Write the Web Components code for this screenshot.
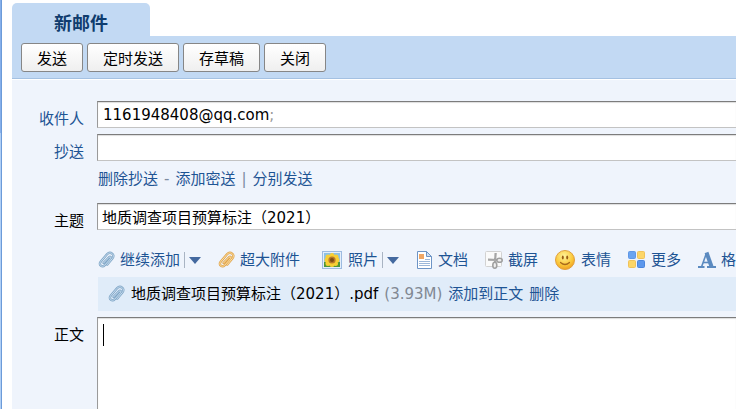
<!DOCTYPE html>
<html lang="zh-CN">
<head>
<meta charset="utf-8">
<title>新邮件</title>
<style>
  html, body {
    margin: 0;
    height: 100%;
    overflow: hidden;
    background: #fff;
  }
  body {
    font-family: "DejaVu Sans", "Noto Sans CJK SC", sans-serif;
    font-size: 15px;
    line-height: 20px;
    color: #000;
    --link: #1e5494;
  }
</style>
</head>
<body>

<mail-page>
  <mail-tab slot="tab">新邮件</mail-tab>
  <tool-button slot="actions">发送</tool-button>
  <tool-button slot="actions">定时发送</tool-button>
  <tool-button slot="actions">存草稿</tool-button>
  <tool-button slot="actions">关闭</tool-button>
  <compose-form></compose-form>
</mail-page>

<script>
const template = (html) => {
  const el = document.createElement('template');
  el.innerHTML = html;
  return el;
};

class BaseElement extends HTMLElement {
  constructor() {
    super();
    this.attachShadow({mode: 'open'});
    this.shadowRoot.appendChild(this.constructor.template.content.cloneNode(true));
  }
}

class MailPage extends BaseElement {
  static template = template(
    `<style>
       :host {
         display: flex;
         height: 100%;
       }
       .rail {
         flex: none;
         width: 1px;
         margin-right: 10px;
         border-right: 1px solid #6c9bd9;
         background: linear-gradient(#86afea 133px, #b0cff5 133px);
       }
       .main {
         flex: 1;
         min-width: 0;
         display: flex;
         flex-direction: column;
         padding-top: 3px;
       }
       .bar {
         display: flex;
         gap: 4px;
         padding: 7px 9px 6px;
         background: #c2d9f3;
         border-bottom: 1px solid #a4c1e2;
         margin-bottom: 1px;
       }
       .content {
         flex: 1;
         min-height: 0;
         display: flex;
         background: #eff4fc;
       }
     </style>
     <div class="rail"></div>
     <main class="main">
       <slot name="tab"></slot>
       <div class="bar"><slot name="actions"></slot></div>
       <div class="content"><slot></slot></div>
     </main>`);
}

class MailTab extends BaseElement {
  static template = template(
    `<style>
       :host {
         display: block;
         align-self: flex-start;
         box-sizing: border-box;
         height: 33px;
         padding: 9px 42px 0;
         border-radius: 5px 5px 0 0;
         background: #c2d9f3;
         color: #0f3c6e;
         font-size: 18px;
         line-height: 24px;
         font-weight: bold;
       }
     </style>
     <slot></slot>`);
}

class ToolButton extends BaseElement {
  static template = template(
    `<style>
       :host {
         display: block;
       }
       button {
         display: block;
         height: 29px;
         padding: 3px 15px 0;
         border: 1px solid #868686;
         border-radius: 3px;
         background: linear-gradient(#fff, #efefef);
         color: #000;
         font: inherit;
         line-height: 24px;
         white-space: nowrap;
         cursor: pointer;
       }
     </style>
     <button type="button"><slot></slot></button>`);
}

const icons = {
  clip: [17, 18,
    `<g fill="none" stroke-linecap="round" stroke-linejoin="round">
       <path stroke="var(--clip-edge, #7fa5c6)" stroke-width="2.400" d="M5.500 12 11 6.300c1.300-1.300 2.600.1 1.500 1.400l-5.800 6.500c-2.500 2.700-6.600-.4-4-3.500L9 3.300c3.300-3.600 8.600.3 5.300 4.300l-5 6"/>
       <path stroke="var(--clip-fill, #c9deef)" stroke-width="1" d="M5.500 12 11 6.300c1.300-1.300 2.600.1 1.500 1.400l-5.800 6.500c-2.500 2.700-6.600-.4-4-3.500L9 3.300c3.300-3.600 8.600.3 5.300 4.300l-5 6"/>
     </g>`],
  photo: [26, 20,
    `<rect x="5.500" y="1.500" width="19" height="17" fill="#e4eefa" stroke="#9dbbe0"/>
     <rect x="7" y="3" width="16" height="14" fill="#8cc0e4"/>
     <path fill="#4f9638" d="M7 12h16v5H7z"/>
     <g fill="#f8cf35">
       <circle cx="15" cy="5.500" r="2.500"/><circle cx="19" cy="7" r="2.500"/><circle cx="20" cy="10" r="2.500"/>
       <circle cx="18.500" cy="13.500" r="2.500"/><circle cx="15" cy="14.500" r="2.500"/><circle cx="11" cy="13.500" r="2.500"/>
       <circle cx="10" cy="10" r="2.500"/><circle cx="11" cy="7" r="2.500"/>
     </g>
     <circle cx="15" cy="10" r="3.600" fill="#b8782a"/><circle cx="15" cy="10" r="2" fill="#7d4c14"/>`],
  doc: [17, 18,
    `<path fill="#fff" stroke="#6d94c6" d="M1.500.5h9l5 5v12h-14z"/>
     <path fill="#cfe0f4" stroke="#6d94c6" d="M10.500.5v5h5z"/>
     <path fill="#f0a765" d="M3 3h5v5H3z"/>
     <path stroke="#9cb7d9" d="M9 8.500h5M3 10.500h11M3 12.500h11M3 14.500h11"/>`],
  cut: [18, 20,
    `<rect x=".5" y="1.500" width="16" height="15" rx="1" fill="#fafafa" stroke="#d2d2d2"/>
     <path fill="#a5a5a5" d="M9.500 3h2.300l-.8 9H9zM3 8.500l9.500.5v2L3 10.700z"/>
     <g fill="#eee" stroke="#a0a0a0" stroke-width="1.600">
       <ellipse cx="9.800" cy="15.300" rx="2" ry="3"/><ellipse cx="14.500" cy="10.300" rx="2.700" ry="2"/>
     </g>`],
  smile: [21, 20,
    `<defs><radialGradient id="face" cx=".45" cy=".3" r=".75"><stop offset="0" stop-color="#fff39a"/><stop offset=".6" stop-color="#fbc93c"/><stop offset="1" stop-color="#ee9a1c"/></radialGradient></defs>
     <circle cx="10" cy="10" r="9.500" fill="url(#face)" stroke="#e0a040"/>
     <ellipse cx="7.800" cy="7.500" rx="1" ry="2" fill="#9a5c14"/><ellipse cx="12.200" cy="7.500" rx="1" ry="2" fill="#9a5c14"/>
     <path d="M5.500 12.500q4.500 4 9 0" fill="none" stroke="#a86a1c" stroke-width="1.200" stroke-linecap="round"/>`],
  more: [18, 18,
    `<rect x=".5" y=".5" width="7" height="7" rx="1" fill="#6ba4f0" stroke="#5f97e6"/>
     <rect x="9.500" y=".5" width="7" height="7" rx="1" fill="#fcd668" stroke="#f0c25a"/>
     <rect x=".5" y="9.500" width="7" height="7" rx="1" fill="#fcd668" stroke="#f0c25a"/>
     <rect x="9.500" y="9.500" width="7" height="7" rx="1" fill="#5c97ec" stroke="#4a85dc"/>`],
  format: [18, 18,
    `<g fill="none" stroke="#5b8ac0">
       <path stroke-width="1.600" d="M8.500 2 3.500 16"/><path stroke-width="4" d="m8.500 1.500 5 14"/>
       <path stroke-width="1.600" d="M5 11.500h7"/><path stroke-width="2" d="M0 16h6.500M9 16h9"/>
     </g>`]
};

// <mail-icon name="clip"></mail-icon>
class MailIcon extends HTMLElement {
  constructor() {
    super();
    this.attachShadow({mode: 'open'});
  }

  connectedCallback() {
    const [width, height, shapes] = icons[this.getAttribute('name')];
    this.shadowRoot.innerHTML =
      `<style>
         :host {
           display: block;
           flex: none;
         }
         :host([tone="gold"]) {
           --clip-edge: #dfa34c;
           --clip-fill: #ffe2a6;
         }
         svg {
           display: block;
         }
       </style>
       <svg width="${width}" height="${height}" viewBox="0 0 ${width} ${height}" aria-hidden="true">${shapes}</svg>`;
  }
}

class AttachTool extends BaseElement {
  static template = template(
    `<style>
       :host {
         display: flex;
         align-items: center;
         flex: none;
         white-space: nowrap;
       }
       button {
         display: flex;
         align-items: center;
         gap: 5px;
         padding: 0;
         border: 0;
         background: none;
         color: var(--link);
         font: inherit;
         cursor: pointer;
       }
       .menu {
         display: none;
         margin-left: 4px;
         padding-left: 4px;
         height: 16px;
         border-left: 1px solid #a9b4c3;
       }
       .menu::before {
         content: "";
         border: 6px solid transparent;
         border-top: 7px solid #44699f;
         border-bottom: 0;
       }
       :host([menu]) .menu {
         display: flex;
       }
     </style>
     <button type="button"><slot name="icon"></slot><slot></slot></button>
     <button type="button" class="menu" aria-label="更多选项"></button>`);
}

class ComposeForm extends BaseElement {
  static template = template(
    `<style>
       :host {
         flex: 1;
         min-width: 0;
         display: flex;
       }
       form {
         flex: 1;
         min-width: 0;
         display: grid;
         grid-template-columns: 72px minmax(0, 1fr);
         grid-template-rows: auto auto auto auto auto auto minmax(60px, 1fr);
         column-gap: 13px;
         padding-top: 21px;
       }
       a {
         color: var(--link);
         text-decoration: none;
       }
       .label {
         padding-top: 8px;
         text-align: right;
       }
       .pick {
         color: var(--link);
         cursor: pointer;
       }
       .box {
         box-sizing: border-box;
         width: 100%;
         height: 27px;
         margin: 0;
         padding: 0 4px;
         border: 1px solid #9a9a9a;
         border-top-color: #7c7c7c;
         border-bottom-color: #c3c3c3;
         border-right: 0;
         border-radius: 0;
         outline: none;
         background: #fff;
         box-shadow: inset 0 1px 1px #ddd;
         color: #000;
         font: inherit;
       }
       .to {
         display: flex;
         align-items: center;
         padding-left: 5px;
       }
       .to span {
         color: #999;
       }
       .to input {
         flex: 1;
         min-width: 0;
         padding: 0;
         border: 0;
         outline: none;
         background: none;
         font: inherit;
       }
       .row {
         margin-bottom: 6px;
       }
       .links {
         grid-column: 2;
         display: flex;
         gap: 6px;
         margin: 2px 0 14px;
         padding-left: 1px;
         color: #7d8ba0;
       }
       .tools {
         grid-column: 2;
         display: flex;
         align-items: center;
         gap: 17px;
         height: 20px;
         margin: 19px 0 7px;
         padding-left: 1px;
         overflow: hidden;
       }
       .file {
         grid-column: 2;
         display: flex;
         align-items: center;
         gap: 6px;
         height: 34px;
         margin: 0 0 6px 1px;
         padding-left: 10px;
         background: #e0ecf9;
         white-space: nowrap;
       }
       .size {
         color: #808893;
       }
       textarea.box {
         height: 100%;
         border-bottom: 0;
         resize: none;
         padding: 6px;
         /* idle caret */
         background: linear-gradient(#000, #000) 5px 6px / 1px 22px no-repeat #fff;
       }
     </style>
     <form>
       <label class="label pick" for="to">收件人</label>
       <div class="box to row">1161948408@qq.com<span>;</span><input id="to"></div>
       <label class="label pick" for="cc">抄送</label>
       <input class="box row" id="cc">
       <div class="links">
         <a href="#">删除抄送</a>-<a href="#">添加密送</a>|<a href="#">分别发送</a>
       </div>
       <label class="label" for="subject">主题</label>
       <input class="box" id="subject" value="地质调查项目预算标注（2021）">
       <div class="tools">
         <attach-tool menu><mail-icon slot="icon" name="clip"></mail-icon>继续添加</attach-tool>
         <attach-tool><mail-icon slot="icon" name="clip" tone="gold"></mail-icon>超大附件</attach-tool>
         <attach-tool menu><mail-icon slot="icon" name="photo"></mail-icon>照片</attach-tool>
         <attach-tool><mail-icon slot="icon" name="doc"></mail-icon>文档</attach-tool>
         <attach-tool><mail-icon slot="icon" name="cut"></mail-icon>截屏</attach-tool>
         <attach-tool><mail-icon slot="icon" name="smile"></mail-icon>表情</attach-tool>
         <attach-tool><mail-icon slot="icon" name="more"></mail-icon>更多</attach-tool>
         <attach-tool><mail-icon slot="icon" name="format"></mail-icon>格式</attach-tool>
       </div>
       <div class="file">
         <mail-icon name="clip"></mail-icon>
         <span>地质调查项目预算标注（2021）.pdf</span>
         <span class="size">(3.93M)</span>
         <a href="#">添加到正文</a>
         <a href="#">删除</a>
       </div>
       <label class="label" for="body">正文</label>
       <textarea class="box" id="body"></textarea>
     </form>`);
}

window.customElements.define('mail-icon', MailIcon);
window.customElements.define('attach-tool', AttachTool);
window.customElements.define('tool-button', ToolButton);
window.customElements.define('mail-tab', MailTab);
window.customElements.define('compose-form', ComposeForm);
window.customElements.define('mail-page', MailPage);
</script>
</body>
</html>
